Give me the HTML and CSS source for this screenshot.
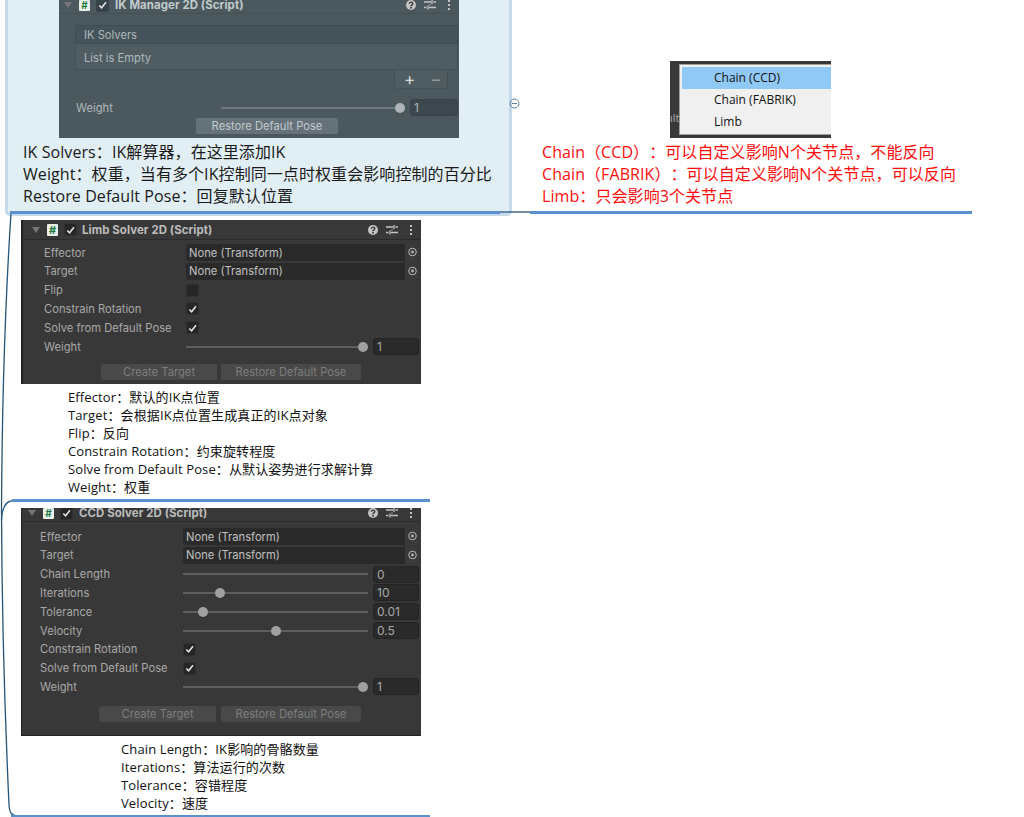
FILE: index.html
```html
<!DOCTYPE html>
<html lang="en">
<head>
    <meta charset="UTF-8">
    <meta name="viewport" content="width=device-width, initial-scale=1.0">
    <title>IK Solver Mind Map</title>
    <link rel="stylesheet" href="styles.css">
</head>
<body>
    <svg class="defs" width="0" height="0">
        <symbol id="tick" viewBox="0 0 12 12"><path d="M2.5 6.5 5 9l4.8-6" fill="none" stroke="#e4e4e4" stroke-width="1.7"/></symbol>
        <symbol id="help" viewBox="0 0 12 12"><circle cx="6" cy="6" r="5" fill="#c4c4c4"/><path d="M4.3 4.8c0-2.2 3.5-2.2 3.5-.2 0 1.3-1.8 1.3-1.8 2.6" fill="none" stroke="#383838" stroke-width="1.4"/><rect x="5.2" y="8" width="1.6" height="1.6" fill="#383838"/></symbol>
        <symbol id="sliders" viewBox="0 0 12 12"><path d="M0 3h7M9.500 3H12M0 8.500h2.500M5 8.500h7M8 1v4M4 6.500v4M6 5.500v1" fill="none" stroke="#c4c4c4" stroke-width="1.300"/></symbol>
        <symbol id="dots" viewBox="0 0 12 12"><path d="M6 1v2M6 5v2M6 9v2" stroke="#c4c4c4" stroke-width="2"/></symbol>
        <symbol id="target" viewBox="0 0 10 10"><circle cx="5" cy="5" r="3.800" fill="none" stroke="#b8b8b8" stroke-width="1"/><circle cx="5" cy="5" r="1.400" fill="#b8b8b8"/></symbol>
    </svg>

    <div class="map">
        <!-- selected topic -->
        <div class="selected"></div>

        <!-- connectors -->
        <svg class="wires" width="1024" height="817">
            <path d="M11 213C6 290 2 400 1.500 512" />
            <path d="M1.500 520C2 505 7 500.500 14 500.500" />
            <path d="M1.500 512C2 640 6 740 9 805C9.500 813 12 816 18 816" />
            <path d="M500 212H530" />
            <circle class="fold" cx="514.500" cy="103.500" r="4.500" />
            <path class="fold" d="M512 103.500H517" />
        </svg>
        <div class="rule rule-root"></div>
        <div class="rule rule-right"></div>
        <div class="rule rule-limb"></div>
        <div class="rule rule-ccd"></div>

        <!-- IK Manager -->
        <div class="panel panel-manager">
            <div class="header header-clip">
                <span class="fold-arrow"></span>
                <span class="script-icon">#</span>
                <span class="check"><svg><use href="#tick"/></svg></span>
                <b class="title">IK Manager 2D (Script)</b>
                <span class="header-icons">
                    <svg><use href="#help"/></svg><svg><use href="#sliders"/></svg><svg><use href="#dots"/></svg>
                </span>
            </div>
            <div class="list">
                <div class="list-title">IK Solvers</div>
                <div class="list-body">List is Empty</div>
                <div class="list-foot"><span>+</span><span class="minus">−</span></div>
            </div>
            <div class="row row-manager">
                <span class="label">Weight</span>
                <span class="slider"><i class="knob knob-full"></i></span>
                <span class="num">1</span>
            </div>
            <div class="buttons buttons-manager"><span class="btn">Restore Default Pose</span></div>
        </div>
        <div class="note note-big note-manager">
            <div>IK Solvers：IK解算器，在这里添加IK</div>
            <div>Weight：权重，当有多个IK控制同一点时权重会影响控制的百分比</div>
            <div>Restore Default Pose：回复默认位置</div>
        </div>

        <!-- solver type menu -->
        <div class="menu-shot">
            <span class="menu-behind">ılt</span>
            <div class="menu">
                <div class="menu-item active">Chain (CCD)</div>
                <div class="menu-item">Chain (FABRIK)</div>
                <div class="menu-item">Limb</div>
            </div>
        </div>
        <div class="note note-big note-types">
            <div>Chain（CCD）：可以自定义影响N个关节点，不能反向</div>
            <div>Chain（FABRIK）：可以自定义影响N个关节点，可以反向</div>
            <div>Limb：只会影响3个关节点</div>
        </div>

        <!-- Limb Solver -->
        <div class="panel panel-limb">
            <div class="header">
                <span class="fold-arrow"></span>
                <span class="script-icon">#</span>
                <span class="check"><svg><use href="#tick"/></svg></span>
                <b class="title">Limb Solver 2D (Script)</b>
                <span class="header-icons">
                    <svg><use href="#help"/></svg><svg><use href="#sliders"/></svg><svg><use href="#dots"/></svg>
                </span>
            </div>
            <div class="rows">
                <div class="row"><span class="label">Effector</span><span class="field">None (Transform)<svg class="pick"><use href="#target"/></svg></span></div>
                <div class="row"><span class="label">Target</span><span class="field">None (Transform)<svg class="pick"><use href="#target"/></svg></span></div>
                <div class="row"><span class="label">Flip</span><span class="check"></span></div>
                <div class="row"><span class="label">Constrain Rotation</span><span class="check"><svg><use href="#tick"/></svg></span></div>
                <div class="row"><span class="label">Solve from Default Pose</span><span class="check"><svg><use href="#tick"/></svg></span></div>
                <div class="row"><span class="label">Weight</span><span class="slider"><i class="knob knob-full"></i></span><span class="num">1</span></div>
            </div>
            <div class="buttons">
                <span class="btn btn-create">Create Target</span>
                <span class="btn btn-restore">Restore Default Pose</span>
            </div>
        </div>
        <div class="note note-small note-limb">
            <div>Effector：默认的IK点位置</div>
            <div>Target：会根据IK点位置生成真正的IK点对象</div>
            <div>Flip：反向</div>
            <div>Constrain Rotation：约束旋转程度</div>
            <div>Solve from Default Pose：从默认姿势进行求解计算</div>
            <div>Weight：权重</div>
        </div>

        <!-- CCD Solver -->
        <div class="panel panel-ccd">
            <div class="header header-clip">
                <span class="fold-arrow"></span>
                <span class="script-icon">#</span>
                <span class="check"><svg><use href="#tick"/></svg></span>
                <b class="title">CCD Solver 2D (Script)</b>
                <span class="header-icons">
                    <svg><use href="#help"/></svg><svg><use href="#sliders"/></svg><svg><use href="#dots"/></svg>
                </span>
            </div>
            <div class="rows">
                <div class="row"><span class="label">Effector</span><span class="field">None (Transform)<svg class="pick"><use href="#target"/></svg></span></div>
                <div class="row"><span class="label">Target</span><span class="field">None (Transform)<svg class="pick"><use href="#target"/></svg></span></div>
                <div class="row"><span class="label">Chain Length</span><span class="slider"></span><span class="num">0</span></div>
                <div class="row"><span class="label">Iterations</span><span class="slider"><i class="knob" style="left: 20%"></i></span><span class="num">10</span></div>
                <div class="row"><span class="label">Tolerance</span><span class="slider"><i class="knob" style="left: 11%"></i></span><span class="num">0.01</span></div>
                <div class="row"><span class="label">Velocity</span><span class="slider"><i class="knob" style="left: 50%"></i></span><span class="num">0.5</span></div>
                <div class="row"><span class="label">Constrain Rotation</span><span class="check"><svg><use href="#tick"/></svg></span></div>
                <div class="row"><span class="label">Solve from Default Pose</span><span class="check"><svg><use href="#tick"/></svg></span></div>
                <div class="row"><span class="label">Weight</span><span class="slider"><i class="knob knob-full"></i></span><span class="num">1</span></div>
            </div>
            <div class="buttons">
                <span class="btn btn-create">Create Target</span>
                <span class="btn btn-restore">Restore Default Pose</span>
            </div>
        </div>
        <div class="note note-small note-ccd">
            <div>Chain Length：IK影响的骨骼数量</div>
            <div>Iterations：算法运行的次数</div>
            <div>Tolerance：容错程度</div>
            <div>Velocity：速度</div>
        </div>
    </div>
</body>
</html>
```

FILE: styles.css
```css
html, body {
    margin: 0;
    padding: 0;
    background: white;
    overflow: hidden;
}

.defs {
    position: absolute;
}

.map {
    position: relative;
    width: 1024px;
    height: 817px;
    overflow: hidden;
    font-family: "Open Sans", "Noto Sans CJK SC", sans-serif;
    text-spacing-trim: space-all;
}

/* mind map canvas items */
.selected {
    position: absolute;
    left: 5px;
    top: -6px;
    width: 501px;
    height: 216px;
    background: #e1eff5;
    border: 3px solid #c6d9e9;
    border-radius: 5px;
}

.wires {
    position: absolute;
    left: 0;
    top: 0;
}

.wires path {
    fill: none;
    stroke: #23557a;
    stroke-width: 1.300;
}

.wires .fold {
    fill: none;
    stroke: #5a7fa0;
    stroke-width: 1;
}

.rule {
    position: absolute;
    background: #5b90cf;
}

.rule-root { left: 10px; top: 211px; width: 490px; height: 3px; }
.rule-right { left: 530px; top: 211px; width: 442px; height: 3px; }
.rule-limb { left: 12px; top: 499px; width: 418px; height: 3px; }
.rule-ccd { left: 11px; top: 815px; width: 419px; height: 2px; }

.note {
    position: absolute;
    white-space: nowrap;
    color: #1a1a1a;
}

.note-big {
    font-size: 16px;
    line-height: 22px;
    letter-spacing: 0.08px;
}

.note-small {
    font-size: 13px;
    line-height: 18px;
    letter-spacing: 0.12px;
    color: #111;
}

.note-manager { left: 23px; top: 141px; }
.note-types { left: 542px; top: 141px; color: #ff0d0d; }
.note-limb { left: 68px; top: 388px; }
.note-ccd { left: 121px; top: 740px; }

/* unity inspector */
.panel {
    position: absolute;
    box-sizing: border-box;
    background: #383838;
    color: #a8a8a8;
    font-family: Inter, "Liberation Sans", sans-serif;
    font-size: 11.2px;
    overflow: hidden;
}

.panel-manager {
    left: 59px;
    top: 0;
    width: 400px;
    height: 138px;
    background: #4b595f;
    color: #b0b8bb;
}

.panel-limb {
    left: 21px;
    top: 220px;
    width: 400px;
    height: 164px;
    border-left: 2px solid #222;
}

.panel-ccd {
    left: 21px;
    top: 508px;
    width: 400px;
    height: 228px;
    border-left: 1px solid #222;
    border-bottom: 1px solid #222;
}

.header {
    display: flex;
    align-items: center;
    height: 19px;
    padding: 0 4px 0 9px;
    border-bottom: 1px solid #2c2c2c;
    color: #bdbdbd;
}

.panel-manager .header { padding-left: 5px; border-color: #435056; color: #c2cacc; }
.panel-ccd .header { padding-left: 6px; }

/* header is cut off by the top of the picture, text sits high */
.panel .header-clip {
    height: 14px;
    padding-bottom: 3px;
    box-sizing: border-box;
}

.fold-arrow {
    width: 0;
    height: 0;
    border: 4px solid transparent;
    border-top: 6px solid #777;
    border-bottom: 0;
    margin-right: 7px;
}

.script-icon {
    display: flex;
    align-items: center;
    justify-content: center;
    flex: none;
    width: 11px;
    height: 12px;
    margin-right: 6px;
    background: #e8efe8;
    color: #1d7a3e;
    font-weight: 700;
    font-size: 11px;
    border-radius: 1px;
}

.header-clip .script-icon {
    height: 11px;
    font-size: 10px;
    line-height: 11px;
}

.check {
    display: flex;
    align-items: center;
    justify-content: center;
    flex: none;
    width: 13px;
    height: 13px;
    background: #262626;
    border: 1px solid #303030;
    border-radius: 2px;
    box-sizing: border-box;
}

.header .check { margin-right: 5px; }
.panel-manager .header .check { margin-right: 6px; }
.panel-ccd .header .check { margin-right: 6px; }

.panel-manager .check { background: #36434a; border-color: #36434a; }

.check svg {
    width: 12px;
    height: 12px;
}

.title {
    font-weight: 700;
    font-size: 11.400px;
    letter-spacing: 0.1px;
}

.header-clip .title {
    line-height: 11px;
}

.header-icons {
    display: flex;
    gap: 7px;
    margin-left: auto;
}

.header-icons svg {
    width: 12px;
    height: 12px;
}

.rows {
    display: flex;
    flex-direction: column;
    padding-top: 3.200px;
}

.panel-ccd .rows { padding-top: 5.200px; }

.row {
    display: flex;
    align-items: center;
    height: 18.800px;
    padding-right: 2px;
}

.label {
    flex: none;
    width: 163px;
    padding-left: 21px;
    box-sizing: border-box;
}

.panel-ccd .label {
    width: 161px;
    padding-left: 18px;
}

.field {
    display: flex;
    align-items: center;
    justify-content: space-between;
    flex: 1;
    height: 17px;
    padding-left: 3px;
    background: #2a2a2a;
    color: #c0c0c0;
    border-radius: 3px;
}

.pick {
    width: 11px;
    height: 10px;
    padding: 3px 1px 4px 2px;
    background: #3a3a3a;
    border-radius: 0 3px 3px 0;
}

.slider {
    position: relative;
    flex: 1;
    height: 2px;
    margin-right: 5px;
    background: #5e5e5e;
}

.knob {
    position: absolute;
    top: -4px;
    width: 10px;
    height: 10px;
    margin-left: -5px;
    border-radius: 50%;
    background: #a0a0a0;
}

.knob-full {
    right: 0;
    margin: 0;
}

.num {
    flex: none;
    width: 46px;
    height: 17px;
    line-height: 15px;
    box-sizing: border-box;
    padding-left: 3px;
    background: #2a2a2a;
    border: 1px solid #232323;
    border-radius: 3px;
    color: #a8a8a8;
    font-size: 12px;
}

.buttons {
    display: flex;
    justify-content: center;
    gap: 4px;
    margin-top: 8px;
    padding-left: 18px;
}

.btn {
    height: 16px;
    line-height: 16px;
    text-align: center;
    background: #494949;
    border-radius: 2px;
    color: #7e7e7e;
}

.btn-create { width: 116px; }
.btn-restore { width: 140px; }

.panel-ccd .buttons { gap: 5px; margin-top: 9.400px; padding-left: 17px; }
.panel-ccd .btn-create { width: 117px; }

/* IK Manager list */
.list {
    margin: 11px 1px 0 16px;
}

.list-title {
    height: 19px;
    line-height: 19px;
    padding-left: 8px;
    background: #45535a;
    border: 1px solid #3f4c52;
    box-sizing: border-box;
    border-radius: 3px 3px 0 0;
}

.list-body {
    height: 26px;
    line-height: 28px;
    padding-left: 8px;
    background: #4f5d63;
    border: 1px solid #435056;
    border-top: 0;
    box-sizing: border-box;
    border-radius: 0 0 3px 3px;
}

.list-foot {
    display: flex;
    align-items: center;
    gap: 15px;
    width: 54px;
    height: 19px;
    margin-left: auto;
    margin-right: 10px;
    padding-left: 9px;
    background: #4f5d63;
    border: 1px solid #435056;
    border-top: 0;
    box-sizing: border-box;
    border-radius: 0 0 3px 3px;
    color: #d8dcdd;
    font-size: 17px;
}

.list-foot .minus { color: #8f9a9e; }

.row-manager {
    margin-top: 9.500px;
    padding-right: 1px;
}

.row-manager .label {
    width: 162px;
    padding-left: 17px;
}

.row-manager .slider { background: #6d797e; }
.row-manager .knob { background: #aeb5b8; }

.row-manager .num {
    width: 48px;
    background: #3c484e;
    border-color: #37434a;
    color: #aeb5b8;
}

.buttons-manager {
    margin-top: 0.500px;
    margin-left: 137px;
    padding-left: 0;
    justify-content: flex-start;
}

.buttons-manager .btn {
    width: 142px;
    background: #65727a;
    color: #c3cace;
}

/* solver dropdown */
.menu-shot {
    position: absolute;
    left: 670px;
    top: 61px;
    width: 161px;
    height: 77px;
    background: #383838;
    overflow: hidden;
    color: #b0b0b0;
    font-family: "Open Sans", sans-serif;
    font-size: 11px;
}

.menu-behind {
    position: absolute;
    left: 0;
    top: 49px;
}

.menu {
    position: absolute;
    left: 9px;
    top: 3px;
    width: 170px;
    height: 71px;
    padding: 2px;
    box-sizing: border-box;
    background: #f0f0f0;
    border: 1px solid #a0a0a0;
}

.menu-item {
    height: 22px;
    line-height: 22px;
    padding-left: 32px;
    color: #111;
    font-size: 12px;
}

.menu-item.active {
    background: #90c8f6;
}
```
